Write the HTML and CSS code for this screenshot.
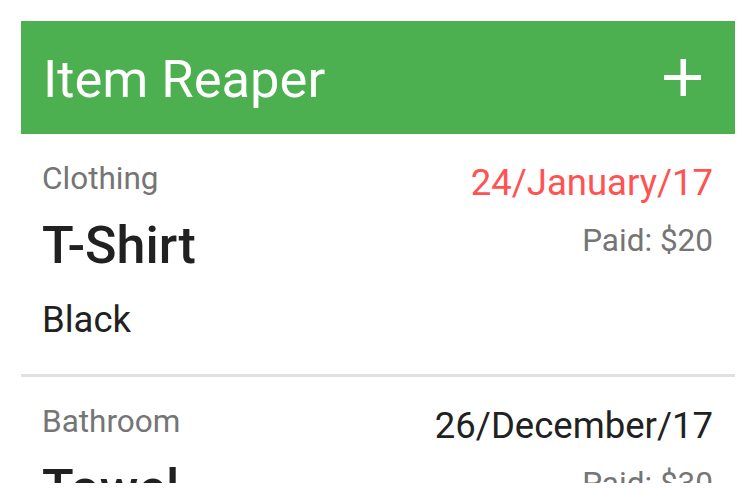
FILE: index.html
```html
<!DOCTYPE html>
<html>
<head>
<meta charset="utf-8">
<link rel="stylesheet" href="styles.css">
</head>
<body>
<div class="app">
  <header class="bar">
    <h1 class="title">Item Reaper</h1>
    <button class="add" aria-label="Add">
      <svg width="38" height="38" viewBox="0 0 38 38"><rect x="16.5" y="0" width="5.5" height="37" fill="#fff"/><rect x="0" y="16" width="37" height="5" fill="#fff"/></svg>
    </button>
  </header>
  <ul class="list">
    <li class="item">
      <div class="left">
        <div class="cat">Clothing</div>
        <div class="name">T-Shirt</div>
        <div class="desc">Black</div>
      </div>
      <div class="right">
        <div class="date overdue">24/January/17</div>
        <div class="paid">Paid: $20</div>
      </div>
    </li>
    <li class="item">
      <div class="left">
        <div class="cat">Bathroom</div>
        <div class="name">Towel</div>
        <div class="desc">Blue</div>
      </div>
      <div class="right">
        <div class="date">26/December/17</div>
        <div class="paid">Paid: $30</div>
      </div>
    </li>
  </ul>
</div>
</body>
</html>
```
FILE: styles.css
```css
html, body {
  margin: 0;
  padding: 0;
  background: #fff;
}
body {
  font-family: Roboto, "Noto Sans", sans-serif;
}
.app {
  margin: 21px;
  width: 714px;
  height: 462px;
  overflow: hidden;
  background: #fff;
}
.bar {
  height: 113px;
  background: #4caf50;
  display: flex;
  align-items: center;
  justify-content: space-between;
  padding: 0 33px 0 22px;
  box-sizing: border-box;
}
.title {
  margin: 3px 0 0 0;
  color: #fff;
  font-weight: 400;
  font-size: 52.5px;
  line-height: 64px;
}
.add {
  border: 0;
  background: none;
  padding: 0;
  width: 38px;
  height: 38px;
  display: flex;
}
.list {
  list-style: none;
  margin: 0;
  padding: 0;
}
.item {
  display: flex;
  justify-content: space-between;
  padding: 23px 22px 32px 21px;
  border-bottom: 3px solid #e0e0e0;
}
.cat {
  font-size: 31.5px;
  line-height: 44px;
  color: #757575;
}
.name {
  margin-top: 13px;
  font-size: 52px;
  line-height: 64px;
  font-weight: 500;
  color: #212121;
}
.desc {
  margin-top: 20px;
  font-size: 36.5px;
  line-height: 44px;
  color: #212121;
}
.right {
  text-align: right;
}
.date {
  font-size: 36.5px;
  line-height: 52px;
  color: #212121;
}
.date.overdue {
  color: #ff5252;
}
.paid {
  margin-top: 10px;
  font-size: 31.5px;
  line-height: 44px;
  color: #757575;
}
```
